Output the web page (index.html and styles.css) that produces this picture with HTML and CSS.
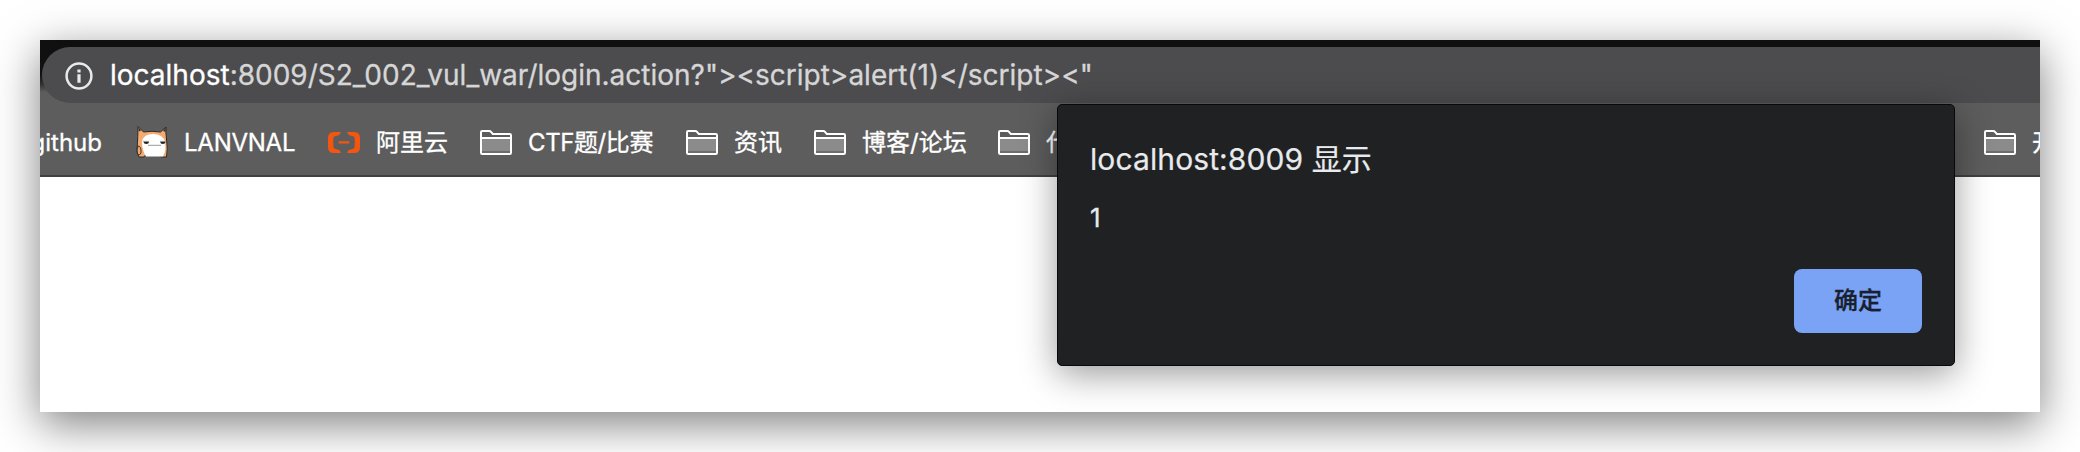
FILE: index.html
```html
<!DOCTYPE html>
<html lang="zh-CN">
<head>
<meta charset="utf-8">
<title>localhost:8009</title>
<link rel="stylesheet" href="styles.css">
</head>
<body>
<svg class="symbols" aria-hidden="true">
  <symbol id="folder" viewBox="0 0 32 26">
    <path d="M2 8.5H30V22H2Z" fill="#8b8b8b"/>
    <path d="M2 21H30V23H2Z" fill="#6c6c6c"/>
    <path d="M1 2.2Q1 1 2.2 1H9.3Q10.3 1 11 1.8L12.8 4H29.8Q31 4 31 5.2V22.8Q31 24 29.8 24H2.2Q1 24 1 22.8ZM1 8H31" fill="none" stroke="#fff" stroke-width="2"/>
  </symbol>
</svg>
<main class="window">
  <header class="toolbar">
    <div class="omnibox">
      <svg class="info" viewBox="0 0 28 28"><circle cx="14" cy="14" r="12.4" fill="none" stroke="#e8eaed" stroke-width="2.5"/><path d="M12.4 7.4h3.2v3.1h-3.2zM12.4 12.3h3.2v8.4h-3.2z" fill="#e8eaed"/></svg>
      <span class="url"><b class="host">localhost</b>:8009/S2_002_vul_war/login.action?"&gt;&lt;script&gt;alert(1)&lt;/script&gt;&lt;"</span>
    </div>
  </header>
  <nav class="bookmarks">
    <a class="bookmark github"><span class="label">github</span></a>
    <a class="bookmark lanvnal">
      <svg class="icon cat" viewBox="0 0 32 34">
        <path d="M2 1.500L7.500 7Q16 5.500 24.500 7L30 2Q29.500 7 30.500 14Q32 24 30.500 32H25L24.500 30.500H9L8 32H3Q1 29 1 25Q2 10 2 1.500Z" fill="#f4ab70" stroke="#2a2a2a" stroke-width="1"/>
        <path d="M2.200 2L5 5.500L3 6.500ZM29.800 2.500L27 6L29.500 7Z" fill="#333"/>
        <path d="M6 17Q7 9 17 9Q27 9 29 17Q30.500 25 27 31.500H10Q6 25 6 17Z" fill="#fff"/>
        <path d="M2 21Q5.500 21 5 28Q4 31 1.500 29Q.400 25 2 21Z" fill="#f2a566" stroke="#333" stroke-width="1"/>
        <ellipse cx="10.300" cy="17.600" rx="2.600" ry="1.300" fill="#222"/><ellipse cx="26.800" cy="17.600" rx="2.500" ry="1.300" fill="#222"/>
        <path d="M7 16.400H13M24 16.400H30" stroke="#999"/><path d="M12 20.300H25" stroke="#999" stroke-width="1"/>
      </svg>
      <span class="label">LANVNAL</span>
    </a>
    <a class="bookmark aliyun">
      <svg class="icon cloud" viewBox="0 0 32 21"><path d="M13 0H6Q0 0 0 6V15Q0 21 6 21H13L11.300 18L7 16.700Q5.300 16.200 5.300 14.500V6.500Q5.300 4.800 7 4.300L11.300 3ZM19 0H26Q32 0 32 6V15Q32 21 26 21H19L20.700 18L25 16.700Q26.700 16.200 26.700 14.500V6.500Q26.700 4.800 25 4.300L20.700 3ZM10.700 9.300H21.300V11.500H10.700Z" fill="#f4560f"/></svg>
      <span class="label">阿里云</span>
    </a>
    <a class="bookmark ctf"><svg class="icon"><use href="#folder"/></svg><span class="label">CTF题/比赛</span></a>
    <a class="bookmark news"><svg class="icon"><use href="#folder"/></svg><span class="label">资讯</span></a>
    <a class="bookmark blogs"><svg class="icon"><use href="#folder"/></svg><span class="label">博客/论坛</span></a>
    <a class="bookmark code"><svg class="icon"><use href="#folder"/></svg><span class="label">代</span></a>
    <a class="bookmark dev"><svg class="icon"><use href="#folder"/></svg><span class="label">开</span></a>
  </nav>
  <section class="dialog" role="alertdialog">
    <h1 class="title">localhost:8009 显示</h1>
    <p class="message">1</p>
    <button class="confirm">确定</button>
  </section>
</main>
</body>
</html>
```
FILE: styles.css
```css
* { box-sizing: border-box; }
body {
  margin: 0;
  padding: 40px;
  height: 452px;
  overflow: hidden;
  background: #fff;
  font-family: Inter, "Noto Sans CJK SC", sans-serif;
}
.symbols { display: none; }
.window {
  position: relative;
  width: 2000px;
  height: 372px;
  background: #fff;
  box-shadow: 0 12px 42px rgba(0, 0, 0, .5);
}
.toolbar {
  height: 63px;
  padding: 7px 0 0 2px;
  background: linear-gradient(#0f0f0f 0, #111 34px, #303030 44px, #5d5d5d 52px);
}
.omnibox {
  display: flex;
  align-items: center;
  height: 56px;
  padding-left: 22px;
  border-radius: 28px 0 0 28px;
  background: #4c4c4e;
}
.info { width: 28px; height: 28px; margin: 1px 0 0 1px; }
.url {
  margin-left: 17px;
  font-size: 28px;
  line-height: 40px;
  color: #d6d6d7;
  -webkit-text-stroke: .3px currentColor;
  white-space: pre;
}
.host { font-weight: 400; color: #fff; }
.bookmarks {
  display: flex;
  align-items: center;
  height: 74px;
  padding-top: 7px;
  border-bottom: 2px solid #414142;
  background: #5d5d5d;
  overflow: hidden;
}
.bookmark {
  display: flex;
  flex: none;
  align-items: center;
  height: 40px;
  font-size: 24px;
  line-height: 40px;
  color: #fff;
  -webkit-text-stroke: .3px currentColor;
  white-space: nowrap;
}
.icon { flex: none; width: 32px; height: 26px; margin-right: 16px; }
.cat { height: 34px; margin-bottom: 1px; }
.cloud { height: 21px; }
.github { width: 96px; padding-right: 34px; justify-content: flex-end; }
.lanvnal { width: 192px; }
.lanvnal .label { letter-spacing: -.25px; }
.aliyun { width: 152px; }
.ctf { width: 206px; }
.ctf .label { letter-spacing: -.4px; }
.news { width: 128px; }
.blogs { width: 184px; }
.code { width: 986px; }
.dev { width: 80px; }
.dialog {
  position: absolute;
  top: 64px;
  left: 1017px;
  display: flex;
  flex-direction: column;
  width: 898px;
  height: 262px;
  padding: 34px 32px 32px;
  border: 1px solid #08090a;
  border-radius: 5px;
  background: #202123;
  color: #e8eaed;
  box-shadow: 0 8px 36px rgba(0, 0, 0, .4);
}
.title {
  margin: 0;
  font-size: 30px;
  font-weight: 400;
  line-height: 40px;
  letter-spacing: .1px;
  -webkit-text-stroke: .2px currentColor;
}
.message { margin: 19px 0 0; font-size: 26px; line-height: 40px; -webkit-text-stroke: .3px currentColor; }
.confirm {
  align-self: flex-end;
  width: 128px;
  height: 64px;
  margin-top: auto;
  padding: 0;
  border: 0;
  border-radius: 8px;
  background: #7aa2f5;
  color: #18202f;
  font: 500 24px/64px Inter, "Noto Sans CJK SC", sans-serif;
  -webkit-text-stroke: .3px currentColor;
}
```
